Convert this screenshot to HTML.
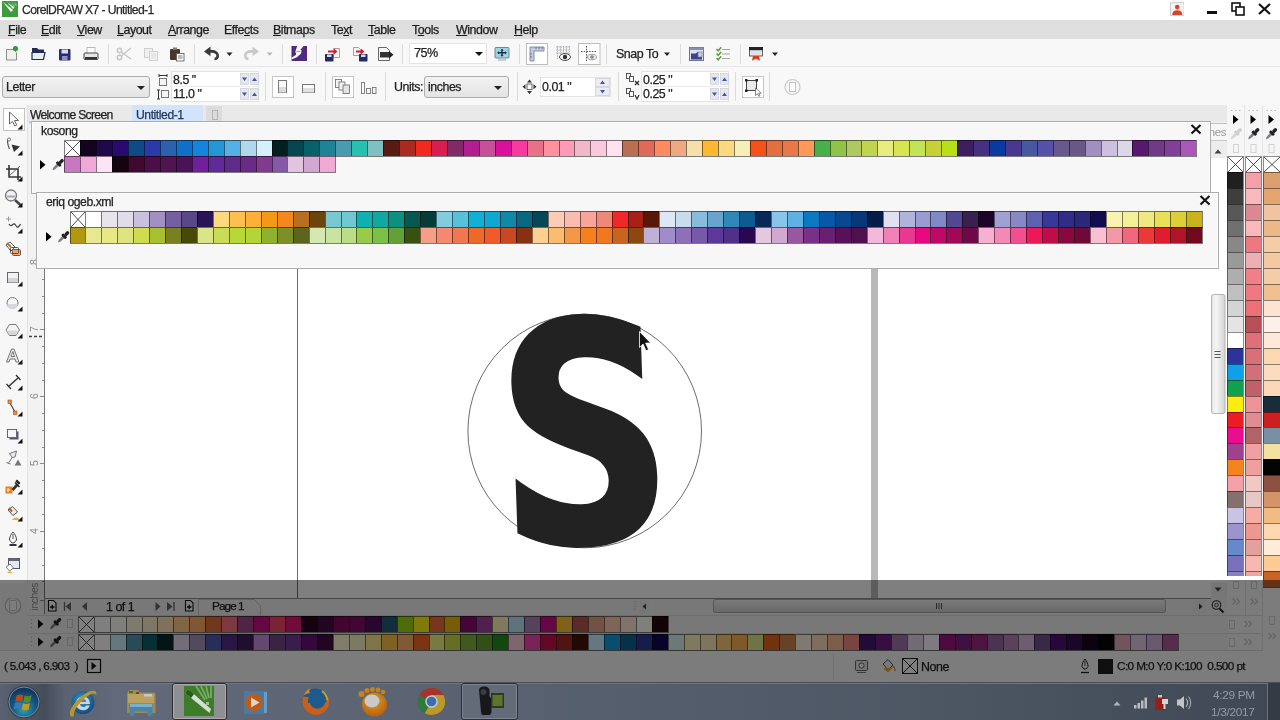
<!DOCTYPE html>
<html lang="en">
<head>
<meta charset="utf-8">
<title>CorelDRAW X7 - Untitled-1</title>
<style>
html,body{margin:0;padding:0;}
body{width:1280px;height:720px;overflow:hidden;position:relative;background:#f0f0f0;
  font-family:"Liberation Sans",sans-serif;font-size:12px;color:#222;letter-spacing:-.45px;}
.a{position:absolute;}
.t{position:absolute;white-space:nowrap;line-height:1;-webkit-text-stroke:.25px currentColor;}
u{text-decoration:underline;text-underline-offset:1px;}
#titlebar{left:0;top:0;width:1280px;height:20px;background:#fff;}
#menubar{left:0;top:20px;width:1280px;height:19px;background:#dedede;}
#menubar .t{top:4px;font-size:12.4px;color:#1c1c1c;}
#toolbar{left:0;top:39px;width:1280px;height:28px;background:#f8f8f8;border-bottom:1px solid #e6e6e6;box-sizing:border-box;}
#propbar{left:0;top:67px;width:1280px;height:38px;background:#f8f8f8;}
#tabbar{left:28px;top:105px;width:1200px;height:17px;background:#e9e9e9;}
#toolbox{left:0;top:105px;width:28px;height:478px;background:#f7f7f7;border-right:1px solid #e2e2e2;box-sizing:border-box;}
#vruler{left:28px;top:122px;width:17px;height:478px;background:#f2f2f2;border-right:1px solid #777;box-sizing:border-box;}
#canvas{left:44px;top:122px;width:1167px;height:476px;background:#fff;}
#vscroll{left:1211px;top:140px;width:16px;height:458px;background:#fff;}
#rpal{left:1227px;top:105px;width:53px;height:546px;background:#f6f6f6;}
.panel{background:#f7f7f7;border:1px solid #adadad;box-sizing:border-box;box-shadow:0 0 0 1px rgba(255,255,255,.6) inset;}
#bottom{left:0;top:598px;width:1228px;height:85px;background:#f0f0f0;}
#taskbar{left:0;top:683px;width:1280px;height:37px;}
#overlay{left:0;top:580px;width:1280px;height:140px;background:rgba(0,0,0,.5);}
.sep{position:absolute;width:1px;background:#dcdcdc;}
.inp{position:absolute;background:#fff;border:1px solid #e3e3e3;box-sizing:border-box;}
.cmb{position:absolute;border:1px solid #acacac;border-radius:3px;box-sizing:border-box;background:linear-gradient(#f2f2f2,#e4e4e4);}
.dd{position:absolute;width:0;height:0;border-left:4px solid transparent;border-right:4px solid transparent;border-top:4px solid #222;}
</style>
</head>
<body>
<div id="root" class="a" style="left:0;top:0;width:1280px;height:720px;will-change:transform">

<!-- ===== title bar ===== -->
<div id="titlebar" class="a">
  <svg class="a" style="left:2px;top:1px" width="16" height="16" viewBox="0 0 16 16">
    <rect width="16" height="16" fill="#3f9b3f"/>
    <path d="M1 1L9 11L11 9Z" fill="#fff"/><path d="M5 1L11 8L12.5 6.5Z" fill="#e8f4e8"/>
    <path d="M9 1l3 5 1-1zM12 1l2 4 .8-1z" fill="#9fd09f"/>
  </svg>
  <div class="t" style="left:22px;top:4px;font-size:12.2px;color:#2a2a2a;letter-spacing:-.62px">CorelDRAW X7 - Untitled-1</div>
  <svg class="a" style="left:1169.500px;top:2px" width="14.500" height="14" viewBox="0 0 16 15">
    <rect x=".5" y=".5" width="15" height="14" fill="#f4f4f4" stroke="#c9c9c9"/>
    <circle cx="8" cy="5.4" r="2.6" fill="#d1492a"/><path d="M2.5 14c0-4 2.5-5 5.5-5s5.5 1 5.5 5z" fill="#d1492a"/>
  </svg>
  <div class="a" style="left:1207px;top:11px;width:10px;height:3px;background:#111"></div>
  <svg class="a" style="left:1231px;top:2px" width="14" height="14" viewBox="0 0 14 14" fill="none" stroke="#111" stroke-width="1.6">
    <rect x="1" y="1" width="8" height="8"/><rect x="5" y="5" width="8" height="8" fill="#fff"/>
  </svg>
  <svg class="a" style="left:1258px;top:3px" width="13" height="12" viewBox="0 0 13 12" stroke="#111" stroke-width="2.2"><path d="M1 1L12 11M12 1L1 11"/></svg>
</div>

<!-- ===== menu bar ===== -->
<div id="menubar" class="a">
  <div class="t" style="left:8px"><u>F</u>ile</div>
  <div class="t" style="left:41px"><u>E</u>dit</div>
  <div class="t" style="left:77px"><u>V</u>iew</div>
  <div class="t" style="left:117px"><u>L</u>ayout</div>
  <div class="t" style="left:168px"><u>A</u>rrange</div>
  <div class="t" style="left:224px">Effe<u>c</u>ts</div>
  <div class="t" style="left:273px"><u>B</u>itmaps</div>
  <div class="t" style="left:331px">Te<u>x</u>t</div>
  <div class="t" style="left:368px"><u>T</u>able</div>
  <div class="t" style="left:412px">T<u>o</u>ols</div>
  <div class="t" style="left:456px"><u>W</u>indow</div>
  <div class="t" style="left:514px"><u>H</u>elp</div>
</div>

<!-- ===== standard toolbar ===== -->
<div id="toolbar" class="a">
  <!-- coordinates inside #toolbar: y offset 39 -->
  <svg class="a" style="left:0;top:0" width="800" height="28" viewBox="0 39 800 28">
    <!-- new -->
    <path d="M6.5 49.5h7l3 3v7.500h-10z" fill="#f1f1f1" stroke="#8c8c8c"/><circle cx="15.5" cy="48.5" r="2.6" fill="#2e9a3a"/>
    <!-- open -->
    <path d="M32 48h5l1.5 1.500h5.500v3h-12z" fill="#1f2c55"/><path d="M32 59.500v-7h13l-1.5 7z" fill="#e9ecf3" stroke="#1f2c55" stroke-width="1.2"/>
    <!-- save -->
    <rect x="59" y="49" width="11.5" height="11.5" rx="1" fill="#2a2c6e"/><rect x="61.5" y="49.5" width="6.5" height="4" fill="#d8dcf0"/><rect x="62" y="56" width="5.5" height="4.5" fill="#8d92c4"/>
    <!-- print -->
    <rect x="87" y="47.5" width="8" height="6" fill="#fff" stroke="#aaa" stroke-width=".8"/><rect x="84" y="53" width="14" height="6.5" rx="1" fill="#e6e6e6" stroke="#444" stroke-width="1"/><rect x="85" y="57" width="12" height="2" fill="#333"/>
    <rect x="108" y="44" width="1" height="20" fill="#dcdcdc"/>
    <!-- cut (disabled) -->
    <g stroke="#c6c6c6" stroke-width="1.5" fill="none"><path d="M121 56L131 48M121 52L131 59"/><circle cx="119.5" cy="50.5" r="2.2"/><circle cx="119.5" cy="57.5" r="2.2"/></g>
    <!-- copy (disabled) -->
    <rect x="144.5" y="48.5" width="8" height="9" fill="#f0f0f0" stroke="#cfcfcf"/><rect x="149.5" y="51.5" width="8" height="9" fill="#f4f4f4" stroke="#cfcfcf"/><path d="M151 54h5M151 56h5M151 58h5" stroke="#d8d8d8"/>
    <!-- paste -->
    <rect x="170" y="49" width="10" height="11" rx="1" fill="#4a342b"/><rect x="173" y="47.5" width="4" height="2.5" fill="#777"/><rect x="176.5" y="53.5" width="7.5" height="7.5" fill="#fff" stroke="#555" stroke-width=".8"/><path d="M178 56h4.500M178 58h4.5" stroke="#555" stroke-width=".8"/>
    <rect x="194" y="44" width="1" height="20" fill="#dcdcdc"/>
    <!-- undo -->
    <path d="M204 51.500l6.5-5v3.200c6 0 8.5 3 8.5 6.3 0 2.5-1.8 4.3-4.5 4.300v-2.600c1.3-.2 1.9-1 1.9-2 0-1.8-1.7-2.9-5.9-2.900v3.500z" fill="#3a3a3a"/>
    <path d="M226.5 52.500h6l-3 3.500z" fill="#222"/>
    <!-- redo disabled -->
    <path d="M259 51.500l-6.5-5v3.200c-6 0-8.5 3-8.5 6.3 0 2.5 1.8 4.3 4.5 4.300v-2.600c-1.3-.2-1.9-1-1.9-2 0-1.8 1.7-2.9 5.9-2.900v3.500z" fill="#c9c9c9"/>
    <path d="M267 52.500h5.500l-2.750 3.200z" fill="#b5b5b5"/>
    <rect x="282" y="44" width="1" height="20" fill="#dcdcdc"/>
    <!-- purple search/connect -->
    <rect x="291.500" y="46" width="15.500" height="15" fill="#4f2a7e"/><path d="M297.200 46h6.300l-3.400 4.300h1.500l-.5 3.200-4.300 3.800-5.300 2.200v-1.800l4.300-2.800.5-2.300h-1.200z" fill="#fff"/><path d="M296.500 51.400h3.800" stroke="#6a5a8a" stroke-width=".7"/>
    <rect x="316" y="44" width="1" height="20" fill="#dcdcdc"/>
    <!-- import -->
    <path d="M333.5 48.500h6v9h-6z" fill="#f4f4f4" stroke="#999" stroke-width=".9"/><rect x="325" y="54" width="8.5" height="7.5" rx=".8" fill="#232a5c"/><rect x="327" y="54.5" width="4.5" height="2.5" fill="#d4d8ee"/><path d="M328 50.500h6v-2l3.5 3-3.5 3v-2h-6z" fill="#d92027"/>
    <!-- export -->
    <path d="M353.5 47.500h5l2 2v6h-7z" fill="#f4f4f4" stroke="#999" stroke-width=".9"/><rect x="359" y="54" width="8.5" height="7.5" rx=".8" fill="#232a5c"/><rect x="361" y="54.5" width="4.5" height="2.5" fill="#d4d8ee"/><path d="M356 50.500h5v-2l3.5 3-3.5 3v-2h-5z" fill="#d92027"/>
    <!-- pdf -->
    <path d="M378.5 47.500h8l3 3v10h-11z" fill="#f6f6f6" stroke="#555" stroke-width=".9"/><rect x="380" y="52" width="9" height="5.5" fill="#333"/><path d="M389 51v7.500l4.5-3.700z" fill="#222"/>
    <rect x="402" y="44" width="1" height="20" fill="#dcdcdc"/>
    <!-- full screen preview -->
    <rect x="495" y="47.5" width="14" height="10.5" rx="1" fill="#9fd3e6" stroke="#5f7e8c" stroke-width=".9"/><path d="M498 52.750h8M502 49.500v6.5" stroke="#1d3340" stroke-width="1.4"/><path d="M497 52.750l2-1.600v3.200zM507 52.750l-2-1.600v3.200zM502 48.800l-1.6 1.800h3.200zM502 56.700l-1.6-1.800h3.200z" fill="#1d3340"/><rect x="498" y="59.5" width="8" height="1" fill="#8aa"/>
    <rect x="519" y="44" width="1" height="20" fill="#dcdcdc"/>
    <!-- rulers toggle -->
    <rect x="526.5" y="43.5" width="21" height="21" fill="#fff" stroke="#bdbdbd"/><path d="M530 47h14v4h-10v10h-4z" fill="#c3c9dc" stroke="#7c86a6" stroke-width=".9"/><path d="M536 47v2M539 47v2M542 47v2M530 54h2M530 57h2" stroke="#5a6488" stroke-width=".8"/>
    <!-- grid eye -->
    <path d="M556 47h14M556 50h14M556 53h14M557.5 46v13M560.5 46v8M563.5 46v8M566.5 46v8M569.5 46v8" stroke="#a8a8b8" stroke-width=".9" stroke-dasharray="1.5 .8"/><ellipse cx="565" cy="57" rx="5.5" ry="3.4" fill="#fff" stroke="#444" stroke-width="1"/><circle cx="565" cy="57" r="2.2" fill="#333"/>
    <!-- guidelines -->
    <rect x="578.5" y="43.5" width="21.5" height="21" fill="#fff" stroke="#bdbdbd"/><path d="M581 51.500h16M586.5 46v16" stroke="#555" stroke-width="1" stroke-dasharray="1.5 1.2"/><ellipse cx="592" cy="57" rx="4.5" ry="2.8" fill="#e8e8e8" stroke="#999" stroke-width=".9"/><circle cx="592" cy="57" r="1.8" fill="#888"/>
    <rect x="606" y="44" width="1" height="20" fill="#dcdcdc"/>
    <path d="M664 52.500h6l-3 3.500z" fill="#222"/>
    <rect x="680" y="44" width="1" height="20" fill="#dcdcdc"/>
    <!-- options -->
    <rect x="689.5" y="47.5" width="14" height="13" fill="#dfe2ef" stroke="#6e7592" stroke-width="1"/><rect x="689.5" y="47.5" width="14" height="2.5" fill="#8890b0"/><path d="M691 59.500v-6h5l1.5-1.8 1 1.800h3.500v6z" fill="#3d4390"/><rect x="698" y="52" width="4" height="5" fill="#c9cde6" stroke="#6e7592" stroke-width=".6"/>
    <!-- checklist -->
    <g stroke="#a4a4a4" stroke-width="1"><path d="M722 49.500h8M722 54h8M722 58.500h8"/></g><g stroke="#5a9e3e" stroke-width="1.5" fill="none"><path d="M716.5 49l1.7 1.8 3-3.600M716.5 53.500l1.7 1.8 3-3.600M716.5 58l1.7 1.8 3-3.6"/></g>
    <rect x="740" y="44" width="1" height="20" fill="#dcdcdc"/>
    <!-- app launcher -->
    <rect x="749.5" y="47.5" width="13" height="8.5" fill="#e3e3ea" stroke="#555" stroke-width=".9"/><rect x="749" y="47" width="14" height="3.2" fill="#23232b"/><path d="M753 56h6l1 4.8-4-2-4 2z" fill="#e5391c"/>
    <path d="M772 52.500h6l-3 3.500z" fill="#222"/>
  </svg>
  <div class="inp" style="left:409px;top:4px;width:78px;height:21px;border-color:#e4e4e4"></div>
  <div class="t" style="left:414px;top:8px;font-size:12.600px;color:#222">75%</div>
  <div class="dd" style="left:475px;top:13px;border-top-color:#111"></div>
  <div class="t" style="left:616px;top:9px;font-size:12.400px;color:#222">Snap To</div>

</div>

<!-- ===== property bar ===== -->
<div id="propbar" class="a">
  <!-- coordinates inside #propbar: y offset 67 -->
  <div class="cmb" style="left:2px;top:9px;width:148px;height:22px"></div>
  <div class="t" style="left:6px;top:14px;font-size:12.4px">Letter</div>
  <div class="dd" style="left:137px;top:19px"></div>
  <div class="inp" style="left:171px;top:4px;width:88px;height:31px"></div>
  <div class="a" style="left:172px;top:19px;width:86px;height:1px;background:#ececec"></div>
  <div class="t" style="left:173px;top:7px;font-size:12.4px">8.5 "</div>
  <div class="t" style="left:173px;top:21px;font-size:12.4px">11.0 "</div>
  <div class="cmb" style="left:424px;top:9px;width:85px;height:22px"></div>
  <div class="t" style="left:394px;top:14px;font-size:12.4px">Units:</div>
  <div class="t" style="left:428px;top:14px;font-size:12.4px">inches</div>
  <div class="dd" style="left:494px;top:19px"></div>
  <div class="inp" style="left:540px;top:10px;width:71px;height:20px"></div>
  <div class="t" style="left:542px;top:14px;font-size:12.4px">0.01 "</div>
  <div class="inp" style="left:641px;top:4px;width:88px;height:31px"></div>
  <div class="a" style="left:642px;top:19px;width:86px;height:1px;background:#ececec"></div>
  <div class="t" style="left:643px;top:7px;font-size:12.4px">0.25 "</div>
  <div class="t" style="left:643px;top:21px;font-size:12.4px">0.25 "</div>
  <svg class="a" style="left:0;top:0" width="820" height="38" viewBox="0 67 820 38">
    <!-- page size icons -->
    <path d="M159 74v3M167 74v3M159 75.500h8" stroke="#333" stroke-width="1"/><rect x="159.500" y="78.500" width="7" height="7" fill="#f4f4f4" stroke="#777"/>
    <path d="M158.500 90v9M157 90h3M157 99h3" stroke="#333" stroke-width="1"/><rect x="161.500" y="90.500" width="7" height="7" fill="#f4f4f4" stroke="#777"/>
    <!-- spinners for size -->
    <g fill="#e6e6ee" stroke="#d0d0d8" stroke-width=".8"><rect x="240.500" y="73.500" width="8" height="11"/><rect x="250.500" y="73.500" width="8" height="11"/><rect x="240.500" y="88.500" width="8" height="11"/><rect x="250.500" y="88.500" width="8" height="11"/></g>
    <g fill="#3b5ba7"><path d="M242 77.500h5l-2.500 3.500zM252 81h5l-2.500-3.500zM242 92.500h5l-2.500 3.500zM252 96h5l-2.500-3.500z"/></g>
    <rect x="265" y="72" width="1" height="29" fill="#dcdcdc"/>
    <!-- portrait -->
    <rect x="272.500" y="76.500" width="21" height="21" fill="#fff" stroke="#c6c6c6"/><rect x="278.500" y="80.500" width="8" height="12" fill="#fafafa" stroke="#777"/><rect x="279" y="87" width="7" height="5.500" fill="#dcdcdc"/>
    <!-- landscape -->
    <rect x="302.500" y="84.500" width="12" height="8" fill="#fafafa" stroke="#777"/><rect x="303" y="88" width="11" height="4.500" fill="#e0e0e0"/>
    <rect x="325" y="72" width="1" height="29" fill="#dcdcdc"/>
    <!-- all pages -->
    <rect x="332.500" y="76.500" width="21" height="21" fill="#fff" stroke="#c6c6c6"/>
    <g fill="#f4f4f4" stroke="#777" stroke-width=".9"><rect x="335.500" y="79.500" width="6" height="8"/><rect x="339" y="82" width="6" height="8"/><rect x="343" y="85" width="6.500" height="8.500" fill="#e4e4e4"/></g>
    <!-- current page -->
    <g fill="#f8f8f8" stroke="#777" stroke-width=".9"><rect x="361.500" y="82.500" width="3" height="11"/><rect x="366.500" y="88.500" width="4" height="5"/><rect x="372.500" y="87.500" width="3.500" height="6"/></g>
    <rect x="385" y="72" width="1" height="29" fill="#dcdcdc"/>
    <rect x="517" y="72" width="1" height="29" fill="#dcdcdc"/>
    <!-- nudge icon -->
    <rect x="527" y="84" width="5" height="5.500" fill="#fff" stroke="#555" stroke-width=".9"/><path d="M529.500 79.500l-2.500 3h5zM529.500 94l-2.500-3h5zM522.500 86.750l3-2.500v5zM536.500 86.750l-3-2.500v5z" fill="#333"/>
    <!-- nudge spinner -->
    <g fill="#ececf2" stroke="#d0d0d8" stroke-width=".8"><rect x="595.500" y="78.500" width="14" height="8"/><rect x="595.500" y="87.500" width="14" height="8"/></g>
    <path d="M600 84h5l-2.500-3.500zM600 90h5l-2.500 3.500z" fill="#3b5ba7"/>
    <rect x="618" y="72" width="1" height="29" fill="#dcdcdc"/>
    <!-- duplicate distance icons -->
    <g fill="none" stroke="#444" stroke-width=".9"><rect x="626.500" y="73.500" width="4" height="5"/><rect x="629.500" y="76.500" width="4" height="5" fill="#f8f8f8"/><rect x="626.500" y="88.500" width="4" height="5"/><rect x="629.500" y="91.500" width="4" height="5" fill="#f8f8f8"/></g>
    <path d="M635 81l4 4M639 81l-4 4" stroke="#222" stroke-width="1.100"/><path d="M635 95l2 4 2-4" stroke="#222" stroke-width="1.100" fill="none"/>
    <g fill="#e6e6ee" stroke="#d0d0d8" stroke-width=".8"><rect x="710.500" y="73.500" width="8" height="11"/><rect x="720.500" y="73.500" width="8" height="11"/><rect x="710.500" y="88.500" width="8" height="11"/><rect x="720.500" y="88.500" width="8" height="11"/></g>
    <g fill="#3b5ba7"><path d="M712 77.500h5l-2.500 3.500zM722 81h5l-2.500-3.500zM712 92.500h5l-2.500 3.500zM722 96h5l-2.500-3.500z"/></g>
    <rect x="735" y="72" width="1" height="29" fill="#dcdcdc"/>
    <!-- treat as filled -->
    <rect x="742.500" y="76.500" width="21" height="21" fill="#fff" stroke="#c6c6c6"/><rect x="746.500" y="80.500" width="10" height="10" fill="#e9e9e9" stroke="#444" stroke-width="1"/><g fill="#222"><rect x="745" y="79" width="2.500" height="2.500"/><rect x="755.500" y="79" width="2.500" height="2.500"/><rect x="745" y="89.500" width="2.500" height="2.500"/></g><path d="M755.500 88v7.500l2-1.800 1.300 2.600 1.200-.6-1.300-2.500h2.500z" fill="#fff" stroke="#555" stroke-width=".7"/>
    <rect x="769" y="72" width="1" height="29" fill="#dcdcdc"/>
    <circle cx="792.500" cy="87" r="7.500" fill="#f6f6f6" stroke="#c9c9c9" stroke-width="1.200"/><rect x="789.500" y="82.500" width="6" height="9" fill="#fdfdfd" stroke="#c4c4c4"/>
  </svg>

</div>

<!-- ===== document area ===== -->
<div id="tabbar" class="a">
  <div class="t" style="left:2px;top:3.5px;font-size:12.2px;color:#222;letter-spacing:-.72px">Welcome Screen</div>
  <div class="a" style="left:104px;top:0;width:71px;height:17px;background:#d3e3fb"></div>
  <div class="t" style="left:108px;top:3.5px;font-size:12.2px;color:#1d3557">Untitled-1</div>
  <div class="a" style="left:178px;top:1px;width:16px;height:15px;background:#dcdcdc"></div>
  <div class="a" style="left:184px;top:5px;width:4px;height:8px;border:1px solid #b4b4b4"></div>
</div>
<div id="toolbox" class="a">
  <svg class="a" style="left:0;top:0" width="28" height="478" viewBox="0 105 28 478">
    <defs><path id="fly" d="M-2.500 3.500L2.500 -1.500V3.500Z" fill="#111"/></defs>
    <!-- pick tool (selected) -->
    <rect x="3.500" y="108.500" width="21" height="22" fill="#fff" stroke="#c3c3c3"/>
    <path d="M9.500 112v12l3-2.700 2.200 4.700 2-.9-2.200-4.600h4z" fill="#fff" stroke="#666" stroke-width="1"/>
    <use href="#fly" x="20" y="126"/>
    <!-- shape tool -->
    <path d="M8 139c-1.500 3 0 6 1.500 10" stroke="#555" stroke-width="1.200" fill="none"/><circle cx="9" cy="139.500" r="1.500" fill="#fff" stroke="#555" stroke-width=".8"/><path d="M11.500 144.500l8.500 2-6 5.500z" fill="#333"/>
    <use href="#fly" x="20" y="152"/>
    <!-- crop -->
    <path d="M9 165v12h12M6 169h12v11" stroke="#333" stroke-width="1.600" fill="none"/><path d="M8 177l12-11" stroke="#666" stroke-width="1"/>
    <use href="#fly" x="20" y="178"/>
    <!-- zoom -->
    <circle cx="11" cy="195.500" r="5.500" fill="#eef2f6" stroke="#777" stroke-width="1.300"/><path d="M7 196.500h8" stroke="#aaa" stroke-width="2"/><path d="M15 200l5.500 5" stroke="#444" stroke-width="2.400"/>
    <use href="#fly" x="20" y="204"/>
    <!-- freehand -->
    <path d="M6 219h5M8.500 216.500v5" stroke="#999" stroke-width="1"/><path d="M9 224c3 5 4-3 6.500 1s3 2 5-1" stroke="#444" stroke-width="1.300" fill="none"/>
    <use href="#fly" x="20" y="230"/>
    <!-- smart fill -->
    <path d="M6 245l4-3 5 5-4 4z" fill="#fff" stroke="#555" stroke-width="1"/><path d="M7 243l4 4" stroke="#c66a22" stroke-width="2"/><rect x="12.500" y="249.500" width="8" height="6" rx="1" fill="#f0a868" stroke="#6a4a3a" stroke-width=".9"/><rect x="10.500" y="247.500" width="8" height="6" rx="1" fill="none" stroke="#444" stroke-width=".9"/>
    <!-- rectangle -->
    <rect x="7.500" y="272.500" width="11" height="10" fill="#f4f4f4" stroke="#666"/><rect x="8" y="278" width="10" height="4.500" fill="#d4d4d8"/>
    <use href="#fly" x="20" y="283"/>
    <!-- ellipse -->
    <circle cx="12.500" cy="303" r="5.500" fill="#f4f4f4" stroke="#777"/><path d="M7.200 304a5.300 5.300 0 0 0 10.600 0z" fill="#d8d8dc"/>
    <use href="#fly" x="20" y="308"/>
    <!-- polygon -->
    <path d="M9.500 324.500h6.500l3.500 5.500-3.500 5.500h-6.500l-3.500-5.500z" fill="#f4f4f4" stroke="#777"/><path d="M6.500 330.500h12.500l-3 4.500h-6.500z" fill="#d8d8dc"/>
    <use href="#fly" x="20" y="335"/>
    <!-- text A -->
    <path d="M6.500 362l5-13h2.500l5 13h-3l-1-3h-5l-1 3zM11 356.500h3.500l-1.700-5z" fill="#e8e8ec" stroke="#666" stroke-width=".9"/>
    <use href="#fly" x="20" y="361"/>
    <!-- dimension -->
    <path d="M8.500 386.500l10-9" stroke="#333" stroke-width="1.400"/><path d="M6.500 384l4.500 5M16 375l4.500 5" stroke="#333" stroke-width="1.300"/>
    <use href="#fly" x="20" y="387"/>
    <!-- connector -->
    <path d="M10 403l5 9" stroke="#444" stroke-width="1.200"/><rect x="8" y="400" width="3.500" height="3.500" fill="#f08a2c" stroke="#9a5418" stroke-width=".6"/><rect x="13.500" y="411" width="3.500" height="3.500" fill="#f08a2c" stroke="#9a5418" stroke-width=".6"/>
    <use href="#fly" x="20" y="413"/>
    <!-- drop shadow -->
    <rect x="9.500" y="431.500" width="9" height="8" fill="#555a66"/><rect x="7.500" y="429.500" width="9" height="8" fill="#f6f6f8" stroke="#667"/>
    <use href="#fly" x="20" y="440"/>
    <!-- transparency -->
    <path d="M9.500 453.500l7-2.500-1.500 6-2.800.6z" fill="#e8ecf2" stroke="#667" stroke-width=".9"/><path d="M12.200 457.600l-3.500 5M6.500 462.500l4 1.500" stroke="#667" stroke-width="1"/><path d="M18 459.500l3.500 6h-7z" fill="#777"/>
    <!-- eyedropper -->
    <rect x="5.500" y="486.500" width="7" height="7" fill="#f07c1e"/><path d="M8 488v4M7 490h3" stroke="#fff" stroke-width=".9"/><path d="M11.500 489l5-5.500 2 2-5 5.500z" fill="#333"/><path d="M15.500 482l4.500 4.500-1 1-4.500-4.500zM17 479.500l3.500 3.500-1.700 1.700-3.500-3.500z" fill="#222"/>
    <use href="#fly" x="20" y="491"/>
    <!-- interactive fill -->
    <path d="M8 510l4.500-3.500 5 5.500-4.500 3.500z" fill="#eee" stroke="#555" stroke-width="1"/><path d="M9 508l3 3.500" stroke="#b85a1c" stroke-width="2"/><path d="M12 520c2-3.500 6-3.500 8 0z" fill="#f2a33a"/>
    <use href="#fly" x="20" y="518"/>
    <!-- outline pen -->
    <path d="M13 532c-2 2-3.500 5-3.500 8l2.500 3h2l2.500-3c0-3-1.500-6-3.500-8z" fill="#f8f8f8" stroke="#444" stroke-width="1"/><path d="M13 534v5" stroke="#444" stroke-width=".9"/><rect x="9.500" y="544" width="7" height="2" fill="#333"/>
    <use href="#fly" x="20" y="544"/>
    <!-- last -->
    <rect x="8.500" y="558.500" width="11" height="10" fill="#e4e8f0" stroke="#556" stroke-width="1"/><rect x="8.500" y="558.500" width="11" height="2.500" fill="#667"/><path d="M6 567l4-3 3.500 4-4 3z" fill="#fafafa" stroke="#666" stroke-width=".8"/><path d="M7 573c1.500-2 4-2 5.500 0z" fill="#f2a33a"/>
  </svg>

</div>
<div id="canvas" class="a"></div>
<div id="vruler" class="a">
  <svg class="a" style="left:0;top:0" width="16" height="478" viewBox="28 122 16 478">
    <g stroke="#8c8c8c" stroke-width="1">
      <path d="M40 262.500h4M40 329.500h4M40 396.500h4M40 463.500h4M40 531.500h4"/>
      <path d="M42 279.500h2M42 296.500h2M42 313.500h2M42 346.500h2M42 363.500h2M42 380.500h2M42 413.500h2M42 430.500h2M42 447.500h2M42 480.500h2M42 497.500h2M42 514.500h2M42 548.500h2M42 565.500h2M42 581.500h2"/>
    </g>
    <path d="M29 336.500h15" stroke="#444" stroke-width="1.400" stroke-dasharray="3 2"/>
    <g font-family="'Liberation Sans',sans-serif" font-size="10.500" fill="#8a8a8a">
      <text transform="translate(38 265) rotate(-90)">8</text>
      <text transform="translate(38 332) rotate(-90)">7</text>
      <text transform="translate(38 399) rotate(-90)">6</text>
      <text transform="translate(38 466) rotate(-90)">5</text>
      <text transform="translate(38 534) rotate(-90)">4</text>
    </g>
  </svg>

</div>
<div id="vscroll" class="a">
  <svg class="a" style="left:-1px;top:-35px" width="17" height="495" viewBox="1210 105 17 495">
    <defs><linearGradient id="vth" x1="0" y1="0" x2="1" y2="0"><stop offset="0" stop-color="#e4e4e4"/><stop offset=".35" stop-color="#f6f6f6"/><stop offset="1" stop-color="#d2d2d2"/></linearGradient></defs>
    <rect x="1210" y="105" width="17" height="17" fill="#e9e9e9"/>
    <rect x="1210" y="123" width="17" height="1.500" fill="#8fd0ee"/>
    <rect x="1210" y="124" width="17" height="16" fill="#f6f6f6"/>
    <rect x="1210" y="140" width="17" height="1" fill="#c9c9c9"/>
    <rect x="1211" y="141" width="16" height="17" fill="#ececec"/>
    <path d="M1214.500 153.500h7l-3.500-4z" fill="#444"/>
    <rect x="1211.500" y="294.500" width="13.500" height="119" rx="2" fill="url(#vth)" stroke="#b4b4b4"/>
    <path d="M1214.500 351.500h6M1214.500 354.500h6M1214.500 357.500h6" stroke="#555" stroke-width="1"/>
    <rect x="1211" y="582" width="16" height="16" fill="#ececec"/><path d="M1214.500 587.500h7l-3.500 4z" fill="#444"/>
    <text x="1226" y="136" text-anchor="end" font-family="'Liberation Sans',sans-serif" font-size="11.500" fill="#9a9a9a" letter-spacing="-.4">inches</text>
  </svg>

</div>

<!-- page frame + artwork -->
<svg class="a" style="left:0;top:0" width="1280" height="720" viewBox="0 0 1280 720">
  <rect x="297" y="268" width="1" height="330" fill="#6e6e6e"/>
  <rect x="871" y="268" width="7" height="330" fill="#b9b9b9"/>
  <circle cx="584.7" cy="431" r="116.8" fill="none" stroke="#3c3c3c" stroke-width="0.75"/>
  <g transform="rotate(-2 584 431)"><text transform="translate(499.1,539.5) scale(0.9395,0.9957)" x="0" y="0" font-family="'DejaVu Sans Mono',monospace" font-weight="bold" font-size="300" fill="#222" stroke="#222" stroke-width="8" stroke-linejoin="miter" stroke-miterlimit="10">S</text></g>
  <!-- mouse cursor -->
  <path d="M639.5 331.5v16l3.6-3.4 2.9 6.6 2.6-1.1-2.9-6.5h5z" fill="#111" stroke="#fff" stroke-width=".8"/>
</svg>

<!-- floating palette panels -->
<div class="a panel" style="left:31px;top:121px;width:1180px;height:73px"></div>
<div class="t" style="left:41px;top:125px;font-size:12.2px">kosong</div>
<div class="a panel" style="left:36px;top:192px;width:1183px;height:77px"></div>
<div class="t" style="left:46px;top:196px;font-size:12.2px">eriq ogeb.xml</div>

<!-- right docked palettes -->
<div id="rpal" class="a"></div>
<svg class="a" style="left:1227px;top:105px" width="53" height="52" viewBox="1227 105 53 52">
  <path d="M1244.500 105v52M1262.500 105v52" stroke="#e6e6e6"/>
  <g id="rph">
    <path d="M1231 110.500h1.500M1235 110.500h1.500M1239 110.500h1.500" stroke="#bcbcbc" stroke-width="1.200"/>
    <path d="M1233 115v9l5.500-4.500z" fill="#000"/>
    <rect x="1233.500" y="144.500" width="5" height="8" fill="none" stroke="#d2d2d2"/>
  </g>
  <use href="#rph" x="17.500"/><use href="#rph" x="35.500"/>
  <g transform="translate(1230.6 139.3) rotate(-45)"><path d="M0 0L2.200 -1.200L8 -1.500V1.500L2.200 1.200Z" fill="#d4d6d8"/><rect x="7.300" y="-2.900" width="2.900" height="5.800" rx=".9" fill="#cfcfd1"/><rect x="9.800" y="-1.700" width="5.400" height="3.400" rx="1.600" fill="#cfcfd1"/></g><g transform="translate(1248.1 139.3) rotate(-45)"><path d="M0 0L2.200 -1.200L8 -1.500V1.500L2.200 1.200Z" fill="#7a8288"/><rect x="7.300" y="-2.900" width="2.900" height="5.800" rx=".9" fill="#222226"/><rect x="9.800" y="-1.700" width="5.400" height="3.400" rx="1.600" fill="#222226"/></g><g transform="translate(1265.8 139.3) rotate(-45)"><path d="M0 0L2.200 -1.200L8 -1.500V1.500L2.200 1.200Z" fill="#7a8288"/><rect x="7.300" y="-2.900" width="2.900" height="5.800" rx=".9" fill="#222226"/><rect x="9.800" y="-1.700" width="5.400" height="3.400" rx="1.600" fill="#222226"/></g>
</svg>


<!-- bottom area -->
<div id="bottom" class="a">
  <!-- coordinates inside #bottom: origin (0,598) ; svg uses page coords -->
  <svg class="a" style="left:0;top:0" width="1280" height="85" viewBox="0 598 1280 85">
    <rect x="44" y="598" width="1167" height="1" fill="#8c8c8c"/>
    <rect x="28" y="615" width="1235" height="1" fill="#dadada"/>
    <rect x="28" y="633" width="1235" height="1" fill="#dcdcdc"/>
    <rect x="0" y="650" width="1280" height="1" fill="#dadada"/>
    <rect x="0" y="651" width="1280" height="32" fill="#f8f8f8"/>
    <!-- ruler corner -->
    <rect x="28" y="598" width="16" height="17" fill="#f2f2f2"/><rect x="44" y="598" width="1" height="16" fill="#8a8a8a"/><path d="M40 600.500h4" stroke="#8c8c8c"/>
    <!-- quick customize circle -->
    <circle cx="13" cy="605.500" r="7.800" fill="#f6f6f6" stroke="#bdbdbd" stroke-width="1.200"/><rect x="9.500" y="600.500" width="7" height="10" rx="1" fill="#fbfbfb" stroke="#c2c2c2"/>
    <!-- page nav -->
    <path d="M48.500 600.500h5l2.500 2.500v8h-7.500z" fill="#fff" stroke="#111" stroke-width="1.100"/><path d="M50 607h4.500M52.250 604.700v4.600" stroke="#111" stroke-width="1.300"/>
    <path d="M64.500 602v9" stroke="#666" stroke-width="1.300"/><path d="M71 602v9l-5.500-4.500z" fill="#666"/>
    <path d="M87 602v9l-5-4.500z" fill="#666"/>
    <path d="M155.500 602v9l5-4.500z" fill="#666"/>
    <path d="M167 602v9l5.500-4.500z" fill="#666"/><path d="M174 602v9" stroke="#666" stroke-width="1.300"/>
    <path d="M185.500 600.500h5l2.500 2.500v8h-7.500z" fill="#fff" stroke="#111" stroke-width="1.100"/><path d="M187 607h4.500M189.250 604.700v4.600" stroke="#111" stroke-width="1.300"/>
    <path d="M198.500 615v-16" stroke="#c8c8c8"/><path d="M198.500 599.500h56l6 6.500v9" stroke="#c4c4c4" fill="none"/>
    <!-- h scroll -->
    <path d="M634 601v10M636 601v10" stroke="#c0c0c0" stroke-dasharray="1 1.500"/>
    <rect x="640" y="600" width="9" height="13" fill="#ececec"/><path d="M646 603.500v6l-3.500-3z" fill="#444"/>
    <defs><linearGradient id="hth" x1="0" y1="0" x2="0" y2="1"><stop offset="0" stop-color="#f6f6f6"/><stop offset=".5" stop-color="#e2e2e2"/><stop offset="1" stop-color="#cfcfcf"/></linearGradient></defs>
    <rect x="713.500" y="599.500" width="452" height="13" rx="2" fill="url(#hth)" stroke="#a8a8a8"/>
    <path d="M936.500 603v6M939 603v6M941.500 603v6" stroke="#555" stroke-width="1"/>
    <rect x="1194" y="600" width="12" height="13" fill="#ececec"/><path d="M1199 603.500v6l3.500-3z" fill="#333"/>
    <circle cx="1216.500" cy="605" r="4.300" fill="none" stroke="#333" stroke-width="1.100"/><circle cx="1216.500" cy="605" r="1.800" fill="none" stroke="#333" stroke-width=".8"/><path d="M1219.500 608.500l4 4" stroke="#222" stroke-width="1.800"/>
    <rect x="1228" y="598" width="35" height="17" fill="#f6f6f6"/><rect x="1263" y="598" width="17" height="53" fill="#f6f6f6"/>
    <path d="M1245.500 598v17M1262.500 598v53" stroke="#e0e0e0"/>
    <!-- palette row controls -->
    <g id="prc">
      <path d="M31.500 619v1M31.500 623v1M31.500 627v1" stroke="#b0b0b0"/>
      <path d="M38 619.500v9l5.500-4.500z" fill="#000"/>
      <g transform="translate(50 629.2) rotate(-45)"><path d="M0 0L2.200 -1.200L8 -1.500V1.500L2.200 1.200Z" fill="#7a8288"/><rect x="7.300" y="-2.900" width="2.900" height="5.800" rx=".9" fill="#222226"/><rect x="9.800" y="-1.700" width="5.400" height="3.400" rx="1.600" fill="#222226"/></g>
      <rect x="67.500" y="619.500" width="5" height="8" fill="none" stroke="#cfcfcf"/>
      <rect x="1229.500" y="620.500" width="5" height="8" fill="none" stroke="#d2d2d2"/>
      <path d="M1244.500 621l3 3-3 3M1248.500 621l3 3-3 3" stroke="#c4c4c4" fill="none" stroke-width="1.100"/>
    </g>
    <use href="#prc" y="18"/>
    <!-- right palette bottom controls -->
    <rect x="1269.500" y="616.500" width="5" height="8" fill="none" stroke="#d2d2d2"/>
    <path d="M1268.500 633l3 3-3 3M1272.500 633l3 3-3 3" stroke="#c4c4c4" fill="none" stroke-width="1.100"/>
    <!-- status bar -->
    <rect x="87.500" y="659.500" width="13" height="13" fill="#fff" stroke="#111" stroke-width="1.200"/><path d="M91.500 662v8l5-4z" fill="#111"/>
    <rect x="833" y="654" width="1" height="26" fill="#e2e2e2"/>
    <rect x="855.500" y="660.500" width="12" height="10" rx="1" fill="#e6e8ee" stroke="#666"/><circle cx="861.500" cy="665.500" r="2.600" fill="#fff" stroke="#555" stroke-width=".9"/><rect x="857" y="672" width="9" height="1" fill="#777"/>
    <path d="M883 664l5-4.500 5 5.500-5 5z" fill="#f3f3f3" stroke="#555" stroke-width="1"/><path d="M883.500 668.500l4.500 4 5-5z" fill="#f0a030"/><path d="M893 666c1.500 1.500 2.500 3 2 5" stroke="#d88a20" stroke-width="1.500" fill="none"/>
    <rect x="902.500" y="658.500" width="15" height="15" fill="#fff" stroke="#222"/><path d="M903 659l14 14M917 659l-14 14" stroke="#222"/>
    <path d="M1085 659c-2 2.500-3 5-3 7.500l2 2.500h2l2-2.500c0-2.500-1-5-3-7.500z" fill="#fff" stroke="#222" stroke-width="1"/><path d="M1085 661v5" stroke="#222" stroke-width=".8"/><path d="M1081 672.500h8" stroke="#222" stroke-width="1.300"/>
    <rect x="1098" y="659" width="15" height="15" fill="#1f1f1f"/>
  </svg>
  <div class="t" style="left:106px;top:3px;font-size:12.4px">1 of 1</div>
  <div class="t" style="left:212px;top:2.5px;font-size:11.8px;letter-spacing:-.95px">Page 1</div>
  <div class="t" style="left:4px;top:63px;font-size:11.8px;letter-spacing:-.72px">( 5.043 , 6.903&nbsp; )</div>
  <div class="t" style="left:921px;top:63px;font-size:12.4px">None</div>
  <div class="t" style="left:1117px;top:63px;font-size:11.8px;letter-spacing:-.62px">C:0 M:0 Y:0 K:100&nbsp; 0.500 pt</div>

</div>
<div id="taskbar" class="a" style="background:linear-gradient(to right,#4b5a70 0,#6b7b92 8%,#8493a8 40%,#a3b0c2 100%)"></div>

<svg class="a" style="left:0;top:0" width="1280" height="720" viewBox="0 0 1280 720" shape-rendering="crispEdges">
<rect x="64" y="140" width="16" height="16" fill="#ffffff"/>
<path d="M65 141L80 156M80 141L65 156" stroke="#222" stroke-width=".8" shape-rendering="auto"/>
<rect x="80" y="140" width="16" height="16" fill="#150420"/>
<rect x="96" y="140" width="16" height="16" fill="#1e0a4a"/>
<rect x="112" y="140" width="16" height="16" fill="#2a0a70"/>
<rect x="128" y="140" width="16" height="16" fill="#0e4a85"/>
<rect x="144" y="140" width="16" height="16" fill="#2a3aa8"/>
<rect x="160" y="140" width="16" height="16" fill="#2a62b0"/>
<rect x="176" y="140" width="16" height="16" fill="#1070c8"/>
<rect x="192" y="140" width="16" height="16" fill="#1585dc"/>
<rect x="208" y="140" width="16" height="16" fill="#2596d4"/>
<rect x="224" y="140" width="16" height="16" fill="#55b0e6"/>
<rect x="240" y="140" width="16" height="16" fill="#b0d8ec"/>
<rect x="256" y="140" width="16" height="16" fill="#d4f0fc"/>
<rect x="272" y="140" width="15" height="16" fill="#02201f"/>
<rect x="287" y="140" width="16" height="16" fill="#04454f"/>
<rect x="303" y="140" width="16" height="16" fill="#066168"/>
<rect x="319" y="140" width="16" height="16" fill="#1f8295"/>
<rect x="335" y="140" width="16" height="16" fill="#4a9ab0"/>
<rect x="351" y="140" width="16" height="16" fill="#2ac0b0"/>
<rect x="367" y="140" width="16" height="16" fill="#80c0c0"/>
<rect x="383" y="140" width="16" height="16" fill="#5a1a14"/>
<rect x="399" y="140" width="16" height="16" fill="#a82a20"/>
<rect x="415" y="140" width="16" height="16" fill="#f02a20"/>
<rect x="431" y="140" width="16" height="16" fill="#d81e50"/>
<rect x="447" y="140" width="16" height="16" fill="#802a6a"/>
<rect x="463" y="140" width="16" height="16" fill="#b01e90"/>
<rect x="479" y="140" width="16" height="16" fill="#c85098"/>
<rect x="495" y="140" width="16" height="16" fill="#d8109a"/>
<rect x="511" y="140" width="16" height="16" fill="#f83aa0"/>
<rect x="527" y="140" width="16" height="16" fill="#e87088"/>
<rect x="543" y="140" width="16" height="16" fill="#ff90a0"/>
<rect x="559" y="140" width="15" height="16" fill="#ff9ab8"/>
<rect x="574" y="140" width="16" height="16" fill="#f0b8c8"/>
<rect x="590" y="140" width="16" height="16" fill="#f8c8dc"/>
<rect x="606" y="140" width="16" height="16" fill="#ffe4f0"/>
<rect x="622" y="140" width="16" height="16" fill="#b87050"/>
<rect x="638" y="140" width="16" height="16" fill="#e06a58"/>
<rect x="654" y="140" width="16" height="16" fill="#ff8a60"/>
<rect x="670" y="140" width="16" height="16" fill="#f0a880"/>
<rect x="686" y="140" width="16" height="16" fill="#f4e0a8"/>
<rect x="702" y="140" width="16" height="16" fill="#fcb830"/>
<rect x="718" y="140" width="16" height="16" fill="#fcd880"/>
<rect x="734" y="140" width="16" height="16" fill="#f4f0b8"/>
<rect x="750" y="140" width="16" height="16" fill="#f4501a"/>
<rect x="766" y="140" width="16" height="16" fill="#e07040"/>
<rect x="782" y="140" width="16" height="16" fill="#e87848"/>
<rect x="798" y="140" width="16" height="16" fill="#ff9858"/>
<rect x="814" y="140" width="16" height="16" fill="#48b048"/>
<rect x="830" y="140" width="16" height="16" fill="#90c448"/>
<rect x="846" y="140" width="15" height="16" fill="#b0c860"/>
<rect x="861" y="140" width="16" height="16" fill="#c0d450"/>
<rect x="877" y="140" width="16" height="16" fill="#e8ec80"/>
<rect x="893" y="140" width="16" height="16" fill="#d8e450"/>
<rect x="909" y="140" width="16" height="16" fill="#c4e458"/>
<rect x="925" y="140" width="16" height="16" fill="#c8d038"/>
<rect x="941" y="140" width="16" height="16" fill="#b8e018"/>
<rect x="957" y="140" width="16" height="16" fill="#3e1e60"/>
<rect x="973" y="140" width="16" height="16" fill="#483080"/>
<rect x="989" y="140" width="16" height="16" fill="#0a3aa0"/>
<rect x="1005" y="140" width="16" height="16" fill="#483890"/>
<rect x="1021" y="140" width="16" height="16" fill="#4858a0"/>
<rect x="1037" y="140" width="16" height="16" fill="#5850a8"/>
<rect x="1053" y="140" width="16" height="16" fill="#685890"/>
<rect x="1069" y="140" width="16" height="16" fill="#685888"/>
<rect x="1085" y="140" width="16" height="16" fill="#a090c0"/>
<rect x="1101" y="140" width="16" height="16" fill="#ccc0dc"/>
<rect x="1117" y="140" width="15" height="16" fill="#dcd8e8"/>
<rect x="1132" y="140" width="16" height="16" fill="#561870"/>
<rect x="1148" y="140" width="16" height="16" fill="#703a88"/>
<rect x="1164" y="140" width="16" height="16" fill="#80409a"/>
<rect x="1180" y="140" width="16" height="16" fill="#a858b8"/>
<path d="M64.5 140v16M80.5 140v16M96.5 140v16M112.5 140v16M128.5 140v16M144.5 140v16M160.5 140v16M176.5 140v16M192.5 140v16M208.5 140v16M224.5 140v16M240.5 140v16M256.5 140v16M272.5 140v16M287.5 140v16M303.5 140v16M319.5 140v16M335.5 140v16M351.5 140v16M367.5 140v16M383.5 140v16M399.5 140v16M415.5 140v16M431.5 140v16M447.5 140v16M463.5 140v16M479.5 140v16M495.5 140v16M511.5 140v16M527.5 140v16M543.5 140v16M559.5 140v16M574.5 140v16M590.5 140v16M606.5 140v16M622.5 140v16M638.5 140v16M654.5 140v16M670.5 140v16M686.5 140v16M702.5 140v16M718.5 140v16M734.5 140v16M750.5 140v16M766.5 140v16M782.5 140v16M798.5 140v16M814.5 140v16M830.5 140v16M846.5 140v16M861.5 140v16M877.5 140v16M893.5 140v16M909.5 140v16M925.5 140v16M941.5 140v16M957.5 140v16M973.5 140v16M989.5 140v16M1005.5 140v16M1021.5 140v16M1037.5 140v16M1053.5 140v16M1069.5 140v16M1085.5 140v16M1101.5 140v16M1117.5 140v16M1132.5 140v16M1148.5 140v16M1164.5 140v16M1180.5 140v16M1196.5 140v16M64 140.5H1197M64 156.5H1197" stroke="rgba(0,0,0,.5)" stroke-width="1" fill="none"/>
<rect x="64" y="156" width="16" height="16" fill="#c878c0"/>
<rect x="80" y="156" width="16" height="16" fill="#f0a8d8"/>
<rect x="96" y="156" width="16" height="16" fill="#fce4f4"/>
<rect x="112" y="156" width="16" height="16" fill="#150410"/>
<rect x="128" y="156" width="16" height="16" fill="#400a30"/>
<rect x="144" y="156" width="16" height="16" fill="#4a0e48"/>
<rect x="160" y="156" width="16" height="16" fill="#501450"/>
<rect x="176" y="156" width="16" height="16" fill="#4a1258"/>
<rect x="192" y="156" width="16" height="16" fill="#70209a"/>
<rect x="208" y="156" width="16" height="16" fill="#602a98"/>
<rect x="224" y="156" width="16" height="16" fill="#602a88"/>
<rect x="240" y="156" width="16" height="16" fill="#6a2a88"/>
<rect x="256" y="156" width="16" height="16" fill="#803a90"/>
<rect x="272" y="156" width="15" height="16" fill="#8858a8"/>
<rect x="287" y="156" width="16" height="16" fill="#e0c4e0"/>
<rect x="303" y="156" width="16" height="16" fill="#d0a8d0"/>
<rect x="319" y="156" width="16" height="16" fill="#f0a8d4"/>
<path d="M64.5 156v16M80.5 156v16M96.5 156v16M112.5 156v16M128.5 156v16M144.5 156v16M160.5 156v16M176.5 156v16M192.5 156v16M208.5 156v16M224.5 156v16M240.5 156v16M256.5 156v16M272.5 156v16M287.5 156v16M303.5 156v16M319.5 156v16M335.5 156v16M64 156.5H336M64 172.5H336" stroke="rgba(0,0,0,.5)" stroke-width="1" fill="none"/>
<rect x="70" y="211" width="15" height="16" fill="#ffffff"/>
<path d="M71 212L85 227M85 212L71 227" stroke="#222" stroke-width=".8" shape-rendering="auto"/>
<rect x="85" y="211" width="16" height="16" fill="#ffffff"/>
<rect x="101" y="211" width="16" height="16" fill="#e8e4ec"/>
<rect x="117" y="211" width="16" height="16" fill="#e0dce8"/>
<rect x="133" y="211" width="16" height="16" fill="#c8c0dc"/>
<rect x="149" y="211" width="16" height="16" fill="#a090c4"/>
<rect x="165" y="211" width="16" height="16" fill="#7460a0"/>
<rect x="181" y="211" width="16" height="16" fill="#584888"/>
<rect x="197" y="211" width="16" height="16" fill="#2a1458"/>
<rect x="213" y="211" width="16" height="16" fill="#fcd880"/>
<rect x="229" y="211" width="16" height="16" fill="#fcc050"/>
<rect x="245" y="211" width="16" height="16" fill="#fcb038"/>
<rect x="261" y="211" width="16" height="16" fill="#f49818"/>
<rect x="277" y="211" width="16" height="16" fill="#f48820"/>
<rect x="293" y="211" width="16" height="16" fill="#b87020"/>
<rect x="309" y="211" width="16" height="16" fill="#6c440c"/>
<rect x="325" y="211" width="16" height="16" fill="#78c8d0"/>
<rect x="341" y="211" width="15" height="16" fill="#70c8d0"/>
<rect x="356" y="211" width="16" height="16" fill="#10b0b0"/>
<rect x="372" y="211" width="16" height="16" fill="#10a8a0"/>
<rect x="388" y="211" width="16" height="16" fill="#0c9080"/>
<rect x="404" y="211" width="16" height="16" fill="#085850"/>
<rect x="420" y="211" width="16" height="16" fill="#043c38"/>
<rect x="436" y="211" width="16" height="16" fill="#80cce0"/>
<rect x="452" y="211" width="16" height="16" fill="#58c0d8"/>
<rect x="468" y="211" width="16" height="16" fill="#10b0d4"/>
<rect x="484" y="211" width="16" height="16" fill="#10a8d0"/>
<rect x="500" y="211" width="16" height="16" fill="#1088a8"/>
<rect x="516" y="211" width="16" height="16" fill="#086880"/>
<rect x="532" y="211" width="16" height="16" fill="#044858"/>
<rect x="548" y="211" width="16" height="16" fill="#fcccb8"/>
<rect x="564" y="211" width="16" height="16" fill="#f8bcb0"/>
<rect x="580" y="211" width="16" height="16" fill="#f8a498"/>
<rect x="596" y="211" width="16" height="16" fill="#f08878"/>
<rect x="612" y="211" width="16" height="16" fill="#f02828"/>
<rect x="628" y="211" width="15" height="16" fill="#a82018"/>
<rect x="643" y="211" width="16" height="16" fill="#581808"/>
<rect x="659" y="211" width="16" height="16" fill="#dce8f4"/>
<rect x="675" y="211" width="16" height="16" fill="#c8dcec"/>
<rect x="691" y="211" width="16" height="16" fill="#88bcdc"/>
<rect x="707" y="211" width="16" height="16" fill="#68a4cc"/>
<rect x="723" y="211" width="16" height="16" fill="#3088b8"/>
<rect x="739" y="211" width="16" height="16" fill="#0c5c90"/>
<rect x="755" y="211" width="16" height="16" fill="#082858"/>
<rect x="771" y="211" width="16" height="16" fill="#88c4ec"/>
<rect x="787" y="211" width="16" height="16" fill="#60b0e4"/>
<rect x="803" y="211" width="16" height="16" fill="#0c78c0"/>
<rect x="819" y="211" width="16" height="16" fill="#0858a8"/>
<rect x="835" y="211" width="16" height="16" fill="#084890"/>
<rect x="851" y="211" width="16" height="16" fill="#083878"/>
<rect x="867" y="211" width="16" height="16" fill="#041c48"/>
<rect x="883" y="211" width="16" height="16" fill="#e0e0f0"/>
<rect x="899" y="211" width="16" height="16" fill="#b0b4dc"/>
<rect x="915" y="211" width="15" height="16" fill="#989cd0"/>
<rect x="930" y="211" width="16" height="16" fill="#8088c8"/>
<rect x="946" y="211" width="16" height="16" fill="#504890"/>
<rect x="962" y="211" width="16" height="16" fill="#382050"/>
<rect x="978" y="211" width="16" height="16" fill="#1c0428"/>
<rect x="994" y="211" width="16" height="16" fill="#a0a0d4"/>
<rect x="1010" y="211" width="16" height="16" fill="#8888c4"/>
<rect x="1026" y="211" width="16" height="16" fill="#6060b0"/>
<rect x="1042" y="211" width="16" height="16" fill="#383898"/>
<rect x="1058" y="211" width="16" height="16" fill="#302c88"/>
<rect x="1074" y="211" width="16" height="16" fill="#2c2878"/>
<rect x="1090" y="211" width="16" height="16" fill="#140c50"/>
<rect x="1106" y="211" width="16" height="16" fill="#f8f4b0"/>
<rect x="1122" y="211" width="16" height="16" fill="#f4f098"/>
<rect x="1138" y="211" width="16" height="16" fill="#f0e880"/>
<rect x="1154" y="211" width="16" height="16" fill="#e8e058"/>
<rect x="1170" y="211" width="16" height="16" fill="#dcd038"/>
<rect x="1186" y="211" width="16" height="16" fill="#c8b418"/>
<path d="M70.5 211v16M85.5 211v16M101.5 211v16M117.5 211v16M133.5 211v16M149.5 211v16M165.5 211v16M181.5 211v16M197.5 211v16M213.5 211v16M229.5 211v16M245.5 211v16M261.5 211v16M277.5 211v16M293.5 211v16M309.5 211v16M325.5 211v16M341.5 211v16M356.5 211v16M372.5 211v16M388.5 211v16M404.5 211v16M420.5 211v16M436.5 211v16M452.5 211v16M468.5 211v16M484.5 211v16M500.5 211v16M516.5 211v16M532.5 211v16M548.5 211v16M564.5 211v16M580.5 211v16M596.5 211v16M612.5 211v16M628.5 211v16M643.5 211v16M659.5 211v16M675.5 211v16M691.5 211v16M707.5 211v16M723.5 211v16M739.5 211v16M755.5 211v16M771.5 211v16M787.5 211v16M803.5 211v16M819.5 211v16M835.5 211v16M851.5 211v16M867.5 211v16M883.5 211v16M899.5 211v16M915.5 211v16M930.5 211v16M946.5 211v16M962.5 211v16M978.5 211v16M994.5 211v16M1010.5 211v16M1026.5 211v16M1042.5 211v16M1058.5 211v16M1074.5 211v16M1090.5 211v16M1106.5 211v16M1122.5 211v16M1138.5 211v16M1154.5 211v16M1170.5 211v16M1186.5 211v16M1202.5 211v16M70 211.5H1203M70 227.5H1203" stroke="rgba(0,0,0,.5)" stroke-width="1" fill="none"/>
<rect x="70" y="227" width="15" height="16" fill="#b09810"/>
<rect x="85" y="227" width="16" height="16" fill="#e8e890"/>
<rect x="101" y="227" width="16" height="16" fill="#e8e888"/>
<rect x="117" y="227" width="16" height="16" fill="#e0e480"/>
<rect x="133" y="227" width="16" height="16" fill="#d0dc50"/>
<rect x="149" y="227" width="16" height="16" fill="#a8c030"/>
<rect x="165" y="227" width="16" height="16" fill="#788020"/>
<rect x="181" y="227" width="16" height="16" fill="#484808"/>
<rect x="197" y="227" width="16" height="16" fill="#dce488"/>
<rect x="213" y="227" width="16" height="16" fill="#c8dc58"/>
<rect x="229" y="227" width="16" height="16" fill="#b8d838"/>
<rect x="245" y="227" width="16" height="16" fill="#b4d438"/>
<rect x="261" y="227" width="16" height="16" fill="#90b030"/>
<rect x="277" y="227" width="16" height="16" fill="#7c9028"/>
<rect x="293" y="227" width="16" height="16" fill="#5c6420"/>
<rect x="309" y="227" width="16" height="16" fill="#d4e8b0"/>
<rect x="325" y="227" width="16" height="16" fill="#c8e4a0"/>
<rect x="341" y="227" width="15" height="16" fill="#bcdc88"/>
<rect x="356" y="227" width="16" height="16" fill="#98cc48"/>
<rect x="372" y="227" width="16" height="16" fill="#7cc048"/>
<rect x="388" y="227" width="16" height="16" fill="#64a038"/>
<rect x="404" y="227" width="16" height="16" fill="#385010"/>
<rect x="420" y="227" width="16" height="16" fill="#f4a088"/>
<rect x="436" y="227" width="16" height="16" fill="#f48870"/>
<rect x="452" y="227" width="16" height="16" fill="#f07850"/>
<rect x="468" y="227" width="16" height="16" fill="#f06828"/>
<rect x="484" y="227" width="16" height="16" fill="#f05c28"/>
<rect x="500" y="227" width="16" height="16" fill="#c84820"/>
<rect x="516" y="227" width="16" height="16" fill="#883010"/>
<rect x="532" y="227" width="16" height="16" fill="#fcd090"/>
<rect x="548" y="227" width="16" height="16" fill="#fcbc70"/>
<rect x="564" y="227" width="16" height="16" fill="#f49848"/>
<rect x="580" y="227" width="16" height="16" fill="#f48020"/>
<rect x="596" y="227" width="16" height="16" fill="#f07820"/>
<rect x="612" y="227" width="16" height="16" fill="#c86420"/>
<rect x="628" y="227" width="15" height="16" fill="#8c4810"/>
<rect x="643" y="227" width="16" height="16" fill="#c0b0d8"/>
<rect x="659" y="227" width="16" height="16" fill="#a08cc8"/>
<rect x="675" y="227" width="16" height="16" fill="#8c70b8"/>
<rect x="691" y="227" width="16" height="16" fill="#7858a8"/>
<rect x="707" y="227" width="16" height="16" fill="#5c3898"/>
<rect x="723" y="227" width="16" height="16" fill="#503088"/>
<rect x="739" y="227" width="16" height="16" fill="#280850"/>
<rect x="755" y="227" width="16" height="16" fill="#e4c8e0"/>
<rect x="771" y="227" width="16" height="16" fill="#d0a8d0"/>
<rect x="787" y="227" width="16" height="16" fill="#9858a0"/>
<rect x="803" y="227" width="16" height="16" fill="#783088"/>
<rect x="819" y="227" width="16" height="16" fill="#682070"/>
<rect x="835" y="227" width="16" height="16" fill="#581058"/>
<rect x="851" y="227" width="16" height="16" fill="#501050"/>
<rect x="867" y="227" width="16" height="16" fill="#f4b8d8"/>
<rect x="883" y="227" width="16" height="16" fill="#f080b8"/>
<rect x="899" y="227" width="16" height="16" fill="#e83890"/>
<rect x="915" y="227" width="15" height="16" fill="#e80880"/>
<rect x="930" y="227" width="16" height="16" fill="#c00868"/>
<rect x="946" y="227" width="16" height="16" fill="#a00858"/>
<rect x="962" y="227" width="16" height="16" fill="#700848"/>
<rect x="978" y="227" width="16" height="16" fill="#f8b0d0"/>
<rect x="994" y="227" width="16" height="16" fill="#f488b8"/>
<rect x="1010" y="227" width="16" height="16" fill="#f05090"/>
<rect x="1026" y="227" width="16" height="16" fill="#ec1858"/>
<rect x="1042" y="227" width="16" height="16" fill="#c00c48"/>
<rect x="1058" y="227" width="16" height="16" fill="#880840"/>
<rect x="1074" y="227" width="16" height="16" fill="#700838"/>
<rect x="1090" y="227" width="16" height="16" fill="#f8c0d0"/>
<rect x="1106" y="227" width="16" height="16" fill="#f498a8"/>
<rect x="1122" y="227" width="16" height="16" fill="#f06880"/>
<rect x="1138" y="227" width="16" height="16" fill="#ec3838"/>
<rect x="1154" y="227" width="16" height="16" fill="#e01c30"/>
<rect x="1170" y="227" width="16" height="16" fill="#b01428"/>
<rect x="1186" y="227" width="16" height="16" fill="#700820"/>
<path d="M70.5 227v16M85.5 227v16M101.5 227v16M117.5 227v16M133.5 227v16M149.5 227v16M165.5 227v16M181.5 227v16M197.5 227v16M213.5 227v16M229.5 227v16M245.5 227v16M261.5 227v16M277.5 227v16M293.5 227v16M309.5 227v16M325.5 227v16M341.5 227v16M356.5 227v16M372.5 227v16M388.5 227v16M404.5 227v16M420.5 227v16M436.5 227v16M452.5 227v16M468.5 227v16M484.5 227v16M500.5 227v16M516.5 227v16M532.5 227v16M548.5 227v16M564.5 227v16M580.5 227v16M596.5 227v16M612.5 227v16M628.5 227v16M643.5 227v16M659.5 227v16M675.5 227v16M691.5 227v16M707.5 227v16M723.5 227v16M739.5 227v16M755.5 227v16M771.5 227v16M787.5 227v16M803.5 227v16M819.5 227v16M835.5 227v16M851.5 227v16M867.5 227v16M883.5 227v16M899.5 227v16M915.5 227v16M930.5 227v16M946.5 227v16M962.5 227v16M978.5 227v16M994.5 227v16M1010.5 227v16M1026.5 227v16M1042.5 227v16M1058.5 227v16M1074.5 227v16M1090.5 227v16M1106.5 227v16M1122.5 227v16M1138.5 227v16M1154.5 227v16M1170.5 227v16M1186.5 227v16M1202.5 227v16M70 227.5H1203M70 243.5H1203" stroke="rgba(0,0,0,.5)" stroke-width="1" fill="none"/>
<rect x="1227" y="156" width="16" height="16" fill="#fff"/>
<path d="M1228 157L1243 172M1243 157L1228 172" stroke="#222" stroke-width=".8" shape-rendering="auto"/>
<rect x="1227" y="172" width="16" height="16" fill="#202020"/>
<rect x="1227" y="188" width="16" height="16" fill="#3e3e3e"/>
<rect x="1227" y="204" width="16" height="16" fill="#585858"/>
<rect x="1227" y="220" width="16" height="16" fill="#707070"/>
<rect x="1227" y="236" width="16" height="16" fill="#888888"/>
<rect x="1227" y="252" width="16" height="16" fill="#9a9a9a"/>
<rect x="1227" y="268" width="16" height="16" fill="#aeaeae"/>
<rect x="1227" y="284" width="16" height="16" fill="#c0c0c0"/>
<rect x="1227" y="300" width="16" height="16" fill="#d4d4d4"/>
<rect x="1227" y="316" width="16" height="16" fill="#e4e4e4"/>
<rect x="1227" y="332" width="16" height="16" fill="#ffffff"/>
<rect x="1227" y="348" width="16" height="16" fill="#2c349c"/>
<rect x="1227" y="364" width="16" height="16" fill="#10a0e8"/>
<rect x="1227" y="380" width="16" height="16" fill="#10a050"/>
<rect x="1227" y="396" width="16" height="16" fill="#fcec10"/>
<rect x="1227" y="412" width="16" height="15" fill="#ec1c24"/>
<rect x="1227" y="427" width="16" height="16" fill="#ec0c90"/>
<rect x="1227" y="443" width="16" height="16" fill="#a04090"/>
<rect x="1227" y="459" width="16" height="16" fill="#f48420"/>
<rect x="1227" y="475" width="16" height="16" fill="#f4a0a8"/>
<rect x="1227" y="491" width="16" height="16" fill="#84706c"/>
<rect x="1227" y="507" width="16" height="16" fill="#c8c4e4"/>
<rect x="1227" y="523" width="16" height="16" fill="#9c94cc"/>
<rect x="1227" y="539" width="16" height="16" fill="#6888cc"/>
<rect x="1227" y="555" width="16" height="16" fill="#7870b8"/>
<rect x="1227" y="571" width="16" height="5" fill="#8880b8"/>
<path d="M1227 156.5h16M1227 172.5h16M1227 188.5h16M1227 204.5h16M1227 220.5h16M1227 236.5h16M1227 252.5h16M1227 268.5h16M1227 284.5h16M1227 300.5h16M1227 316.5h16M1227 332.5h16M1227 348.5h16M1227 364.5h16M1227 380.5h16M1227 396.5h16M1227 412.5h16M1227 427.5h16M1227 443.5h16M1227 459.5h16M1227 475.5h16M1227 491.5h16M1227 507.5h16M1227 523.5h16M1227 539.5h16M1227 555.5h16M1227 571.5h16M1227.5 156V576M1243.5 156V576" stroke="rgba(0,0,0,.45)" stroke-width="1" fill="none"/>
<rect x="1245" y="156" width="16" height="16" fill="#fff"/>
<path d="M1246 157L1261 172M1261 157L1246 172" stroke="#222" stroke-width=".8" shape-rendering="auto"/>
<rect x="1245" y="172" width="16" height="16" fill="#f4a0a8"/>
<rect x="1245" y="188" width="16" height="16" fill="#f8b8bc"/>
<rect x="1245" y="204" width="16" height="16" fill="#dc8890"/>
<rect x="1245" y="220" width="16" height="16" fill="#f8b8bc"/>
<rect x="1245" y="236" width="16" height="16" fill="#ec7880"/>
<rect x="1245" y="252" width="16" height="16" fill="#ecb0b4"/>
<rect x="1245" y="268" width="16" height="16" fill="#f08088"/>
<rect x="1245" y="284" width="16" height="16" fill="#f07880"/>
<rect x="1245" y="300" width="16" height="16" fill="#ec7078"/>
<rect x="1245" y="316" width="16" height="16" fill="#b85058"/>
<rect x="1245" y="332" width="16" height="16" fill="#e07078"/>
<rect x="1245" y="348" width="16" height="16" fill="#d87078"/>
<rect x="1245" y="364" width="16" height="16" fill="#d07078"/>
<rect x="1245" y="380" width="16" height="16" fill="#c06068"/>
<rect x="1245" y="396" width="16" height="16" fill="#ec9498"/>
<rect x="1245" y="412" width="16" height="15" fill="#e08c90"/>
<rect x="1245" y="427" width="16" height="16" fill="#b06468"/>
<rect x="1245" y="443" width="16" height="16" fill="#f0a0a0"/>
<rect x="1245" y="459" width="16" height="16" fill="#f0a09c"/>
<rect x="1245" y="475" width="16" height="16" fill="#f0c8c4"/>
<rect x="1245" y="491" width="16" height="16" fill="#e8c8c4"/>
<rect x="1245" y="507" width="16" height="16" fill="#f4aca4"/>
<rect x="1245" y="523" width="16" height="16" fill="#ec9890"/>
<rect x="1245" y="539" width="16" height="16" fill="#e4a09c"/>
<rect x="1245" y="555" width="16" height="16" fill="#f8b8b0"/>
<rect x="1245" y="571" width="16" height="5" fill="#eca8a0"/>
<path d="M1245 156.5h16M1245 172.5h16M1245 188.5h16M1245 204.5h16M1245 220.5h16M1245 236.5h16M1245 252.5h16M1245 268.5h16M1245 284.5h16M1245 300.5h16M1245 316.5h16M1245 332.5h16M1245 348.5h16M1245 364.5h16M1245 380.5h16M1245 396.5h16M1245 412.5h16M1245 427.5h16M1245 443.5h16M1245 459.5h16M1245 475.5h16M1245 491.5h16M1245 507.5h16M1245 523.5h16M1245 539.5h16M1245 555.5h16M1245 571.5h16M1245.5 156V576M1261.5 156V576" stroke="rgba(0,0,0,.45)" stroke-width="1" fill="none"/>
<rect x="1263" y="156" width="17" height="16" fill="#fff"/>
<path d="M1264 157L1280 172M1280 157L1264 172" stroke="#222" stroke-width=".8" shape-rendering="auto"/>
<rect x="1263" y="172" width="17" height="16" fill="#dca070"/>
<rect x="1263" y="188" width="17" height="16" fill="#e4a470"/>
<rect x="1263" y="204" width="17" height="16" fill="#f0c4a0"/>
<rect x="1263" y="220" width="17" height="16" fill="#ecb888"/>
<rect x="1263" y="236" width="17" height="16" fill="#f4cca8"/>
<rect x="1263" y="252" width="17" height="16" fill="#f4c8a0"/>
<rect x="1263" y="268" width="17" height="16" fill="#f4cca8"/>
<rect x="1263" y="284" width="17" height="16" fill="#f0c090"/>
<rect x="1263" y="300" width="17" height="16" fill="#fce4d0"/>
<rect x="1263" y="316" width="17" height="16" fill="#fef0e8"/>
<rect x="1263" y="332" width="17" height="16" fill="#fee8d8"/>
<rect x="1263" y="348" width="17" height="16" fill="#fcd8b0"/>
<rect x="1263" y="364" width="17" height="16" fill="#fcdcc0"/>
<rect x="1263" y="380" width="17" height="16" fill="#fcd8b8"/>
<rect x="1263" y="396" width="17" height="16" fill="#182c3c"/>
<rect x="1263" y="412" width="17" height="15" fill="#cc2020"/>
<rect x="1263" y="427" width="17" height="16" fill="#7890a4"/>
<rect x="1263" y="443" width="17" height="16" fill="#f4e0a0"/>
<rect x="1263" y="459" width="17" height="16" fill="#040404"/>
<rect x="1263" y="475" width="17" height="16" fill="#8c5040"/>
<rect x="1263" y="491" width="17" height="16" fill="#d49468"/>
<rect x="1263" y="507" width="17" height="16" fill="#f0bc84"/>
<rect x="1263" y="523" width="17" height="16" fill="#fcd8b0"/>
<rect x="1263" y="539" width="17" height="16" fill="#fdecd8"/>
<rect x="1263" y="555" width="17" height="16" fill="#fccc94"/>
<rect x="1263" y="571" width="17" height="9" fill="#c86428"/>
<path d="M1263 156.5h17M1263 172.5h17M1263 188.5h17M1263 204.5h17M1263 220.5h17M1263 236.5h17M1263 252.5h17M1263 268.5h17M1263 284.5h17M1263 300.5h17M1263 316.5h17M1263 332.5h17M1263 348.5h17M1263 364.5h17M1263 380.5h17M1263 396.5h17M1263 412.5h17M1263 427.5h17M1263 443.5h17M1263 459.5h17M1263 475.5h17M1263 491.5h17M1263 507.5h17M1263 523.5h17M1263 539.5h17M1263 555.5h17M1263 571.5h17M1263.5 156V580M1280.5 156V580" stroke="rgba(0,0,0,.45)" stroke-width="1" fill="none"/>
<rect x="78" y="616" width="16" height="16" fill="#ffffff"/>
<path d="M79 617L94 632M94 617L79 632" stroke="#222" stroke-width=".8" shape-rendering="auto"/>
<rect x="94" y="616" width="16" height="16" fill="#ffffff"/>
<rect x="110" y="616" width="16" height="16" fill="#fffff9"/>
<rect x="126" y="616" width="16" height="16" fill="#fff4dc"/>
<rect x="142" y="616" width="15" height="16" fill="#ffeecb"/>
<rect x="157" y="616" width="16" height="16" fill="#ffe2b4"/>
<rect x="173" y="616" width="16" height="16" fill="#ffcb8b"/>
<rect x="189" y="616" width="16" height="16" fill="#ffae68"/>
<rect x="205" y="616" width="16" height="16" fill="#e26e3a"/>
<rect x="221" y="616" width="16" height="16" fill="#ff6e80"/>
<rect x="237" y="616" width="16" height="16" fill="#a2468b"/>
<rect x="253" y="616" width="16" height="16" fill="#cb1180"/>
<rect x="269" y="616" width="16" height="16" fill="#f44668"/>
<rect x="285" y="616" width="16" height="16" fill="#e21774"/>
<rect x="301" y="616" width="16" height="16" fill="#29061d"/>
<rect x="317" y="616" width="16" height="16" fill="#400c46"/>
<rect x="333" y="616" width="16" height="16" fill="#850c5d"/>
<rect x="349" y="616" width="16" height="16" fill="#850c68"/>
<rect x="365" y="616" width="16" height="16" fill="#510c5d"/>
<rect x="381" y="616" width="16" height="16" fill="#235d74"/>
<rect x="397" y="616" width="16" height="16" fill="#9dd717"/>
<rect x="413" y="616" width="16" height="16" fill="#fff417"/>
<rect x="429" y="616" width="15" height="16" fill="#ee6e3a"/>
<rect x="444" y="616" width="16" height="16" fill="#eeba11"/>
<rect x="460" y="616" width="16" height="16" fill="#8b0c6e"/>
<rect x="476" y="616" width="16" height="16" fill="#a240a2"/>
<rect x="492" y="616" width="16" height="16" fill="#fff4bf"/>
<rect x="508" y="616" width="16" height="16" fill="#bae8ff"/>
<rect x="524" y="616" width="16" height="16" fill="#ae85ba"/>
<rect x="540" y="616" width="16" height="16" fill="#cb0c8b"/>
<rect x="556" y="616" width="16" height="16" fill="#ffc52e"/>
<rect x="572" y="616" width="16" height="16" fill="#b45751"/>
<rect x="588" y="616" width="16" height="16" fill="#e8a28b"/>
<rect x="604" y="616" width="16" height="16" fill="#ffcbae"/>
<rect x="620" y="616" width="16" height="16" fill="#ffe8d7"/>
<rect x="636" y="616" width="16" height="16" fill="#fffff9"/>
<rect x="652" y="616" width="16" height="16" fill="#29060c"/>
<path d="M78.5 616v16M94.5 616v16M110.5 616v16M126.5 616v16M142.5 616v16M157.5 616v16M173.5 616v16M189.5 616v16M205.5 616v16M221.5 616v16M237.5 616v16M253.5 616v16M269.5 616v16M285.5 616v16M301.5 616v16M317.5 616v16M333.5 616v16M349.5 616v16M365.5 616v16M381.5 616v16M397.5 616v16M413.5 616v16M429.5 616v16M444.5 616v16M460.5 616v16M476.5 616v16M492.5 616v16M508.5 616v16M524.5 616v16M540.5 616v16M556.5 616v16M572.5 616v16M588.5 616v16M604.5 616v16M620.5 616v16M636.5 616v16M652.5 616v16M668.5 616v16M78 616.5H669M78 632.5H669" stroke="rgba(0,0,0,.5)" stroke-width="1" fill="none"/>
<rect x="78" y="634" width="16" height="16" fill="#ffffff"/>
<path d="M79 635L94 650M94 635L79 650" stroke="#222" stroke-width=".8" shape-rendering="auto"/>
<rect x="94" y="634" width="16" height="16" fill="#ffffff"/>
<rect x="110" y="634" width="16" height="16" fill="#cbeef9"/>
<rect x="126" y="634" width="16" height="16" fill="#5197ae"/>
<rect x="142" y="634" width="15" height="16" fill="#0c6368"/>
<rect x="157" y="634" width="16" height="16" fill="#06292e"/>
<rect x="173" y="634" width="16" height="16" fill="#e2dcf4"/>
<rect x="189" y="634" width="16" height="16" fill="#a297ba"/>
<rect x="205" y="634" width="16" height="16" fill="#515dae"/>
<rect x="221" y="634" width="16" height="16" fill="#512e85"/>
<rect x="237" y="634" width="16" height="16" fill="#401d5d"/>
<rect x="253" y="634" width="16" height="16" fill="#cb91dc"/>
<rect x="269" y="634" width="16" height="16" fill="#74468b"/>
<rect x="285" y="634" width="16" height="16" fill="#743a97"/>
<rect x="301" y="634" width="16" height="16" fill="#681174"/>
<rect x="317" y="634" width="16" height="16" fill="#400c46"/>
<rect x="333" y="634" width="16" height="16" fill="#fff9d1"/>
<rect x="349" y="634" width="16" height="16" fill="#f9f4c5"/>
<rect x="365" y="634" width="16" height="16" fill="#ffe88b"/>
<rect x="381" y="634" width="16" height="16" fill="#ffc546"/>
<rect x="397" y="634" width="16" height="16" fill="#ffb468"/>
<rect x="413" y="634" width="16" height="16" fill="#f46823"/>
<rect x="429" y="634" width="15" height="16" fill="#eef48b"/>
<rect x="444" y="634" width="16" height="16" fill="#cbdc46"/>
<rect x="460" y="634" width="16" height="16" fill="#80b43a"/>
<rect x="476" y="634" width="16" height="16" fill="#689d2e"/>
<rect x="492" y="634" width="16" height="16" fill="#239123"/>
<rect x="508" y="634" width="16" height="16" fill="#ffcbdc"/>
<rect x="524" y="634" width="16" height="16" fill="#f446ae"/>
<rect x="540" y="634" width="16" height="16" fill="#cb1151"/>
<rect x="556" y="634" width="16" height="16" fill="#a22923"/>
<rect x="572" y="634" width="16" height="16" fill="#46110c"/>
<rect x="588" y="634" width="16" height="16" fill="#cbeeff"/>
<rect x="604" y="634" width="16" height="16" fill="#119ddc"/>
<rect x="620" y="634" width="16" height="16" fill="#0c6397"/>
<rect x="636" y="634" width="16" height="16" fill="#2e3a97"/>
<rect x="652" y="634" width="16" height="16" fill="#110651"/>
<rect x="668" y="634" width="16" height="16" fill="#d7f4e8"/>
<rect x="684" y="634" width="16" height="16" fill="#fff4bf"/>
<rect x="700" y="634" width="16" height="16" fill="#ffe8ba"/>
<rect x="716" y="634" width="15" height="16" fill="#ffcb74"/>
<rect x="731" y="634" width="16" height="16" fill="#ffb451"/>
<rect x="747" y="634" width="16" height="16" fill="#dce88b"/>
<rect x="763" y="634" width="16" height="16" fill="#e8631d"/>
<rect x="779" y="634" width="16" height="16" fill="#d18551"/>
<rect x="795" y="634" width="16" height="16" fill="#fff4e2"/>
<rect x="811" y="634" width="16" height="16" fill="#ffdcba"/>
<rect x="827" y="634" width="16" height="16" fill="#ffba97"/>
<rect x="843" y="634" width="16" height="16" fill="#f48b80"/>
<rect x="859" y="634" width="16" height="16" fill="#46176e"/>
<rect x="875" y="634" width="16" height="16" fill="#6e1d80"/>
<rect x="891" y="634" width="16" height="16" fill="#a274ae"/>
<rect x="907" y="634" width="16" height="16" fill="#e2d7e8"/>
<rect x="923" y="634" width="16" height="16" fill="#fff4ff"/>
<rect x="939" y="634" width="16" height="16" fill="#9d1780"/>
<rect x="955" y="634" width="16" height="16" fill="#802380"/>
<rect x="971" y="634" width="16" height="16" fill="#9d2980"/>
<rect x="987" y="634" width="16" height="16" fill="#9768a2"/>
<rect x="1003" y="634" width="15" height="16" fill="#b485ba"/>
<rect x="1018" y="634" width="16" height="16" fill="#dcbae2"/>
<rect x="1034" y="634" width="16" height="16" fill="#745197"/>
<rect x="1050" y="634" width="16" height="16" fill="#511174"/>
<rect x="1066" y="634" width="16" height="16" fill="#340c51"/>
<rect x="1082" y="634" width="16" height="16" fill="#170623"/>
<rect x="1098" y="634" width="16" height="16" fill="#060606"/>
<rect x="1114" y="634" width="16" height="16" fill="#e2a8ba"/>
<rect x="1130" y="634" width="16" height="16" fill="#e2cbe2"/>
<rect x="1146" y="634" width="16" height="16" fill="#d1b4dc"/>
<rect x="1162" y="634" width="16" height="16" fill="#ae5797"/>
<path d="M78.5 634v16M94.5 634v16M110.5 634v16M126.5 634v16M142.5 634v16M157.5 634v16M173.5 634v16M189.5 634v16M205.5 634v16M221.5 634v16M237.5 634v16M253.5 634v16M269.5 634v16M285.5 634v16M301.5 634v16M317.5 634v16M333.5 634v16M349.5 634v16M365.5 634v16M381.5 634v16M397.5 634v16M413.5 634v16M429.5 634v16M444.5 634v16M460.5 634v16M476.5 634v16M492.5 634v16M508.5 634v16M524.5 634v16M540.5 634v16M556.5 634v16M572.5 634v16M588.5 634v16M604.5 634v16M620.5 634v16M636.5 634v16M652.5 634v16M668.5 634v16M684.5 634v16M700.5 634v16M716.5 634v16M731.5 634v16M747.5 634v16M763.5 634v16M779.5 634v16M795.5 634v16M811.5 634v16M827.5 634v16M843.5 634v16M859.5 634v16M875.5 634v16M891.5 634v16M907.5 634v16M923.5 634v16M939.5 634v16M955.5 634v16M971.5 634v16M987.5 634v16M1003.5 634v16M1018.5 634v16M1034.5 634v16M1050.5 634v16M1066.5 634v16M1082.5 634v16M1098.5 634v16M1114.5 634v16M1130.5 634v16M1146.5 634v16M1162.5 634v16M1178.5 634v16M78 634.5H1179M78 650.5H1179" stroke="rgba(0,0,0,.5)" stroke-width="1" fill="none"/>
</svg>

<svg class="a" style="left:0;top:105px" width="1280" height="180" viewBox="0 105 1280 180">
  <g stroke="#111" stroke-width="2.100" fill="none"><path d="M1191.500 125l9 8.500M1200.500 125l-9 8.500"/><path d="M1200.500 196l9 8.500M1209.500 196l-9 8.500"/></g>
  <path d="M40 160v9.500l5.500-4.750z" fill="#000"/>
  <path d="M46 232v9.500l5.500-4.750z" fill="#000"/>
  <g transform="translate(52.5 170.2) rotate(-45)"><path d="M0 0L2.200 -1.200L8 -1.500V1.500L2.200 1.200Z" fill="#7a8288"/><rect x="7.300" y="-2.900" width="2.900" height="5.800" rx=".9" fill="#222226"/><rect x="9.800" y="-1.700" width="5.400" height="3.400" rx="1.600" fill="#222226"/></g><g transform="translate(58 242.4) rotate(-45)"><path d="M0 0L2.200 -1.200L8 -1.500V1.500L2.200 1.200Z" fill="#7a8288"/><rect x="7.300" y="-2.900" width="2.900" height="5.800" rx=".9" fill="#222226"/><rect x="9.800" y="-1.700" width="5.400" height="3.400" rx="1.600" fill="#222226"/></g>
  <!-- bits peeking out left of the floating panels -->
  <path d="M29 122.500h3" stroke="#8fd0ee" stroke-width="2"/>
</svg>
<svg class="a" style="left:1227px;top:576px" width="53" height="36" viewBox="1227 576 53 36">
  <rect x="1227" y="576" width="36" height="24" fill="#fff"/><rect x="1227" y="580" width="36" height="32" fill="#f6f6f6"/>
  <path d="M1245.500 580v32M1262.500 580v32" stroke="#e0e0e0"/>
  <path d="M1232.500 598.500l3 3-3 3M1236.500 598.500l3 3-3 3M1250.500 598.500l3 3-3 3M1254.500 598.500l3 3-3 3" stroke="#c4c4c4" fill="none" stroke-width="1.100"/>
  <rect x="1233.500" y="581.500" width="5" height="7" fill="none" stroke="#cdcdcd"/><rect x="1251.500" y="581.500" width="5" height="7" fill="none" stroke="#cdcdcd"/>
  <rect x="1263" y="580" width="17" height="7" fill="#c86428"/><rect x="1263" y="587" width="17" height="25" fill="#f6f6f6"/><rect x="1263" y="587" width="17" height="1" fill="#7a5a48"/>
</svg>

<svg class="a" style="left:28px;top:580px" width="16" height="36" viewBox="28 580 16 36">
  <text transform="translate(38 610.500) rotate(-90)" font-family="'Liberation Sans',sans-serif" font-size="10.300" letter-spacing="-.35" fill="#8e8e8e">inches</text>
</svg>

<div id="overlay" class="a"></div>

<svg class="a" style="left:0;top:682px" width="1280" height="38" viewBox="0 682 1280 38">
  <defs>
    <linearGradient id="tbg" x1="0" y1="0" x2="1" y2="0"><stop offset="0" stop-color="#5a6272"/><stop offset=".035" stop-color="#454d5b"/><stop offset=".05" stop-color="#5a6272"/><stop offset=".09" stop-color="#62697a"/><stop offset=".3" stop-color="#5c6474"/><stop offset=".75" stop-color="#4c5663"/><stop offset="1" stop-color="#3f4853"/></linearGradient>
    <radialGradient id="orb" cx=".5" cy=".75" r=".8"><stop offset="0" stop-color="#2ea0b4"/><stop offset=".5" stop-color="#15557f"/><stop offset="1" stop-color="#0c2b4c"/></radialGradient>
    <radialGradient id="ieg" cx=".45" cy=".4" r=".7"><stop offset="0" stop-color="#3a9ac8"/><stop offset="1" stop-color="#0c3e74"/></radialGradient>
    <radialGradient id="gom" cx=".45" cy=".35" r=".75"><stop offset="0" stop-color="#e09a28"/><stop offset="1" stop-color="#b05a08"/></radialGradient>
  </defs>
  <rect x="0" y="682" width="1280" height="38" fill="url(#tbg)"/>
  <rect x="0" y="682" width="1280" height="1" fill="#4a4e54"/><rect x="0" y="683" width="1280" height="1" fill="#6e7686"/>
  <!-- start orb -->
  <circle cx="24" cy="702" r="16.500" fill="#39434f"/><circle cx="24" cy="702" r="15" fill="url(#orb)" stroke="#6f8aa0" stroke-width="1"/>
  <path d="M16.500 695.500c2.500-1.500 4.500-1.300 6.800-.2l-1.300 6.200c-2.300-1-4.300-1-6.700.3z" fill="#b84a1c"/>
  <path d="M24.600 695.600c2.400.9 4.400 1 6.900-.4l-1.200 6.300c-2.400 1.300-4.500 1.200-6.900.2z" fill="#5a8a2c"/>
  <path d="M15 703.300c2.400-1.300 4.400-1.300 6.700-.3l-1.300 6.300c-2.300-1-4.300-1-6.700.3z" fill="#3a78b8"/>
  <path d="M23 703.300c2.400 1 4.500 1 6.900-.2l-1.300 6.300c-2.400 1.200-4.500 1.200-6.900.2z" fill="#c89a20"/>
  <!-- IE -->
  <circle cx="83" cy="702.500" r="11.500" fill="url(#ieg)"/>
  <path d="M76 703.500c0-4 3-7 7-7s7 3 7 7.500h-10c.3 2 1.600 3 3.300 3 1.300 0 2.300-.6 2.800-1.600h3.600c-.9 3-3.400 4.800-6.500 4.800-4.200 0-7.200-2.900-7.200-6.700zm4-1.500h6.200c-.2-1.800-1.400-2.900-3.100-2.900s-2.800 1.100-3.100 2.900z" fill="#c9d4dc"/>
  <path d="M70.500 716c-2-3.500 1-10 8-17 6-6 13-9.500 16.500-8 1.500.7 1.700 2.300 1 4.500-.3-1.500-1.300-2.300-3-2-3 .5-8 4-12.500 9-5 5.500-7.500 10.500-6.500 13.500-1.300.7-2.700.8-3.500 0z" fill="#b8962c"/>
  <!-- explorer -->
  <path d="M127 693.500l2-3.500h9l2 2.500h14l1.500 1.500v19h-28.500z" fill="#a08a50"/><rect x="128" y="694" width="26" height="9" fill="#b9a15f"/><rect x="129" y="691" width="4" height="2" fill="#3c7a30"/><rect x="136" y="692" width="3" height="2" fill="#8a3a20"/><rect x="144" y="694" width="8" height="2.500" fill="#c4c8d0"/>
  <path d="M129.500 704h23v12h-5v-4.500h-13v4.500h-5z" fill="#4a84a8"/><rect x="130" y="704" width="22" height="3" fill="#7ab0cc"/>
  <!-- active corel button -->
  <rect x="172.500" y="683.500" width="54" height="36" rx="2.500" fill="#8d8f93" stroke="#2c2e33" stroke-width="1"/><rect x="173.500" y="684.500" width="52" height="34" rx="2" fill="none" stroke="#a9abae" stroke-width="1"/>
  <rect x="184" y="686" width="30" height="30" fill="#3d7d28"/>
  <path d="M185 693l3-4 23 20-1.500 4z" fill="#d8dcd6"/><path d="M185 693l3-4 6 5-3 4z" fill="#2a5a1c"/><path d="M196 686l9 14M201 686l6 13M206 686l3 12M211 686l0 12" stroke="#7aa86a" stroke-width="1.800"/><rect x="206" y="702" width="3" height="3" fill="#9cc08c"/>
  <!-- media player -->
  <rect x="244" y="691" width="21" height="23" fill="#4a7aa2"/><rect x="264" y="692" width="3" height="21" fill="#6a9cc0"/><circle cx="254" cy="702.500" r="8.500" fill="#c45a12"/><path d="M251 697.500v10l8.500-5z" fill="#d8d8d8"/>
  <!-- firefox -->
  <circle cx="315.500" cy="701.500" r="13" fill="#1f5a8e"/><path d="M303 697c-2 7 1 14 8 17 7 2.500 14-.5 17-7 1.500-3.500 1.500-8-.5-11.500.5 3.500-.5 6-2.500 7.500-1 3.500-4 5.500-7.500 5.500-4 0-7-2.500-7.500-5.500l-2 0c-.5-2 0-4 1-5.500-2.500-1-4.500-1-6-.5z" fill="#c8601a"/><path d="M304 695c1-3 3.500-5.500 6-6.500-1 1.500-1 3 0 4.500-2 .5-4 1-6 2z" fill="#d08a20"/><path d="M322 691c3 2 5 5.500 5.500 9.500" stroke="#c8a030" stroke-width="2" fill="none"/>
  <!-- gom -->
  <ellipse cx="374.500" cy="704.500" rx="12.500" ry="12" fill="url(#gom)"/><ellipse cx="372" cy="701" rx="7.500" ry="6.500" fill="#c9c9c9"/><circle cx="361.500" cy="694" r="3" fill="#c8821c"/><circle cx="367" cy="690.500" r="2.500" fill="#c8821c"/><circle cx="372.500" cy="689.500" r="2.400" fill="#c8821c"/><circle cx="378" cy="690" r="2.400" fill="#c8821c"/><circle cx="383" cy="692" r="2.300" fill="#c8821c"/>
  <!-- chrome -->
  <circle cx="431.500" cy="701.500" r="13.500" fill="#a5342a"/><path d="M431.500 701.500l-11.700-6.700a13.500 13.500 0 0 0 5 18.400z" fill="#2c7c3c"/><path d="M431.500 701.500h13.500a13.500 13.500 0 0 1-20.200 11.700z" fill="#b89a2a"/><path d="M431.500 701.500l-11.700-6.700a13.500 13.500 0 0 1 23.400 0z" fill="#a5342a"/><path d="M431.500 695h11.900a13.500 13.500 0 0 1-5.100 18.200z" fill="#b89a2a"/><circle cx="431.500" cy="701.500" r="6.300" fill="#c6c8ca"/><circle cx="431.500" cy="701.500" r="4.800" fill="#3a6cb8"/>
  <!-- camera button -->
  <rect x="461.500" y="683.500" width="56" height="36" rx="2.500" fill="#646b78" stroke="#2a2e36" stroke-width="1"/><rect x="462.500" y="684.500" width="54" height="34" rx="2" fill="none" stroke="#7e8592" stroke-width="1"/>
  <path d="M479 690c0-2 2-3.500 5-3.500s5.500 1.500 5.500 4v6l2 2v14l-1.500 2.500h-8l-1-3z" fill="#17181a"/><circle cx="483.500" cy="692" r="3" fill="#3a3e44"/><rect x="491" y="693" width="13" height="15" fill="#2e3a1a"/><rect x="492.500" y="695" width="10" height="11" fill="#5e742c"/>
  <!-- tray -->
  <path d="M1113.500 705.500h7l-3.500-4z" fill="#b4b8bc"/>
  <g fill="#b8bcc0"><rect x="1134" y="705" width="2.500" height="3.500"/><rect x="1137.500" y="703" width="2.500" height="5.500"/><rect x="1141" y="700.500" width="2.500" height="8"/><rect x="1144.500" y="697.500" width="2.500" height="11"/></g>
  <rect x="1155.500" y="697" width="9" height="13" rx="1" fill="#9a1c1c"/><rect x="1158" y="695" width="4" height="2.500" fill="#c4c4c4"/><path d="M1162 699h6v5h-2.500v5h-2v-5h-1.500z" fill="#d4d4d4"/>
  <path d="M1177 699.500h3l4-3.500v13l-4-3.500h-3z" fill="#c0c4c8"/><path d="M1186 698.500c2 2.500 2 6 0 8.500M1188.500 696.500c3 3.500 3 9 0 12.500" stroke="#a8acb0" stroke-width="1.100" fill="none"/>
  <rect x="1267" y="683" width="13" height="37" fill="#353b44"/><rect x="1267" y="683" width="1" height="37" fill="#6a717c"/>
  <g font-family="'Liberation Sans',sans-serif" font-size="11.800" fill="#969ba3" letter-spacing="-.3"><text x="1213" y="699">4:29 PM</text><text x="1211" y="716">1/3/2017</text></g>
</svg>

</div>
</body>
</html>
